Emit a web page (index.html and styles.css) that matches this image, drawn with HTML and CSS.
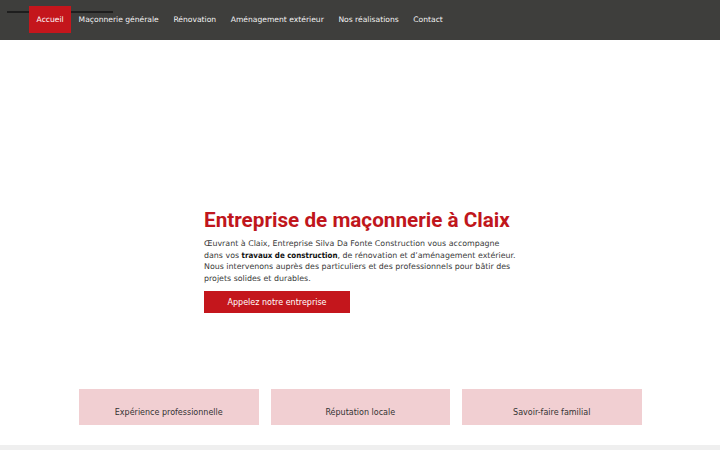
FILE: index.html
```html
<!DOCTYPE html>
<html lang="fr">
<head>
<meta charset="utf-8">
<title>Entreprise Silva Da Fonte Construction</title>
<link rel="stylesheet" href="styles.css">
</head>
<body>
<header class="topbar">
  <span class="topline"></span>
  <nav class="nav">
    <a class="nav-item active" href="#">Accueil</a>
    <a class="nav-item" href="#">Maçonnerie générale</a>
    <a class="nav-item" href="#">Rénovation</a>
    <a class="nav-item" href="#">Aménagement extérieur</a>
    <a class="nav-item" href="#">Nos réalisations</a>
    <a class="nav-item" href="#">Contact</a>
  </nav>
</header>
<main>
  <section class="hero">
    <div class="hero-inner">
      <h1 class="hero-title">Entreprise de maçonnerie à Claix</h1>
      <p class="hero-text">Œuvrant à Claix, Entreprise Silva Da Fonte Construction vous accompagne dans vos <strong>travaux de construction</strong>, de rénovation et d’aménagement extérieur. Nous intervenons auprès des particuliers et des professionnels pour bâtir des projets solides et durables.</p>
      <a class="btn" href="#">Appelez notre entreprise</a>
    </div>
  </section>
  <section class="cards">
    <div class="card">Expérience professionnelle</div>
    <div class="card">Réputation locale</div>
    <div class="card">Savoir-faire familial</div>
  </section>
  <div class="band"></div>
</main>
</body>
</html>
```
FILE: styles.css
```css
* { box-sizing: border-box; }
html, body { margin: 0; padding: 0; }
body {
  font-family: "DejaVu Sans", "Open Sans", sans-serif;
  background: #ffffff;
  color: #333333;
  width: 720px;
  height: 450px;
  overflow: hidden;
}
.topbar {
  position: relative;
  height: 40px;
  background: #3e3e3c;
  padding-left: 29px;
  display: flex;
  align-items: flex-start;
}
.topline {
  position: absolute;
  left: 7px;
  top: 11px;
  width: 106px;
  height: 2px;
  background: #1e1e1e;
}
.nav { display: flex; margin-top: 6px; position: relative; }
.nav-item {
  display: flex;
  align-items: center;
  padding: 0 7.3px;
  font-size: 7.6px;
  color: #f2f2f2;
  text-decoration: none;
  height: 27px;
}
.nav-item.active {
  background: #c4161c;
  color: #ffffff;
  padding: 0 7.6px;
}
.hero {
  height: 349px;
  display: flex;
  padding-left: 204px;
  padding-top: 168px;
}
.hero-inner { width: 320px; }
.hero-title {
  font-family: Roboto, "Liberation Sans", sans-serif;
  font-weight: 700;
  font-size: 20.7px;
  line-height: 24px;
  color: #c0161c;
  margin: 0 0 6px 0;
  white-space: nowrap;
}
.hero-text {
  font-size: 7.9px;
  line-height: 11.5px;
  color: #3a3a3a;
  margin: 0 0 7px 0;
  width: 314px;
}
.hero-text strong {
  font-family: "DejaVu Sans Condensed", "DejaVu Sans", sans-serif;
  color: #111111;
  font-weight: 700;
  line-height: 1;
}
.btn {
  display: flex;
  align-items: center;
  justify-content: center;
  width: 146px;
  height: 22px;
  background: #c4161c;
  color: #ffffff;
  font-size: 8px;
  text-decoration: none;
}
.cards {
  display: flex;
  gap: 12px;
  padding-left: 79px;
  height: 56px;
}
.card {
  width: 179.5px;
  height: 36px;
  background: #f1cfd2;
  display: flex;
  align-items: flex-end;
  justify-content: center;
  padding-bottom: 8px;
  font-size: 8px;
  color: #333333;
}
.band { height: 10px; background: #efefef; }
```
